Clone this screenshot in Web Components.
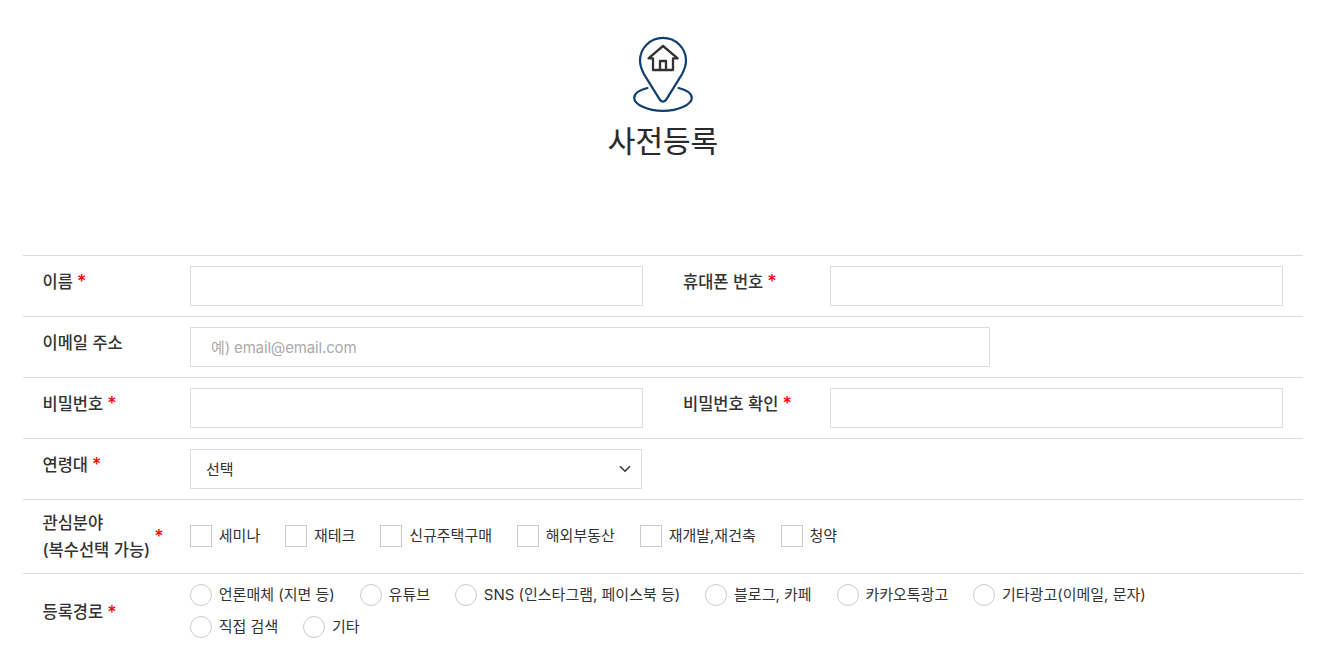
<!DOCTYPE html>
<html lang="ko">
<head>
<meta charset="utf-8">
<title>사전등록</title>
<style>
  html { overflow: hidden; }
  body {
    margin: 0;
    background: #fff;
    color: #333;
    font-family: Inter, "Noto Sans CJK KR", sans-serif;
  }
</style>
</head>
<body>

<signup-page>
  <form-heading>사전등록</form-heading>
  <form-table>
    <form-row>
      <form-label required raised>이름</form-label>
      <text-field></text-field>
      <form-label required raised>휴대폰 번호</form-label>
      <text-field></text-field>
    </form-row>
    <form-row>
      <form-label raised>이메일 주소</form-label>
      <text-field class="wide" placeholder="예) email@email.com"></text-field>
    </form-row>
    <form-row>
      <form-label required raised>비밀번호</form-label>
      <text-field type="password"></text-field>
      <form-label required raised>비밀번호 확인</form-label>
      <text-field type="password"></text-field>
    </form-row>
    <form-row>
      <form-label required raised>연령대</form-label>
      <select-field value="선택"></select-field>
    </form-row>
    <form-row>
      <form-label required>관심분야<br>(복수선택 가능)</form-label>
      <choice-group class="span">
        <choice-item>세미나</choice-item>
        <choice-item>재테크</choice-item>
        <choice-item>신규주택구매</choice-item>
        <choice-item>해외부동산</choice-item>
        <choice-item>재개발,재건축</choice-item>
        <choice-item>청약</choice-item>
      </choice-group>
    </form-row>
    <form-row>
      <form-label required lowered>등록경로</form-label>
      <choice-group class="span">
        <choice-item round>언론매체 (지면 등)</choice-item>
        <choice-item round>유튜브</choice-item>
        <choice-item round>SNS (인스타그램, 페이스북 등)</choice-item>
        <choice-item round>블로그, 카페</choice-item>
        <choice-item round>카카오톡광고</choice-item>
        <choice-item round>기타광고(이메일, 문자)</choice-item>
        <choice-item round>직접 검색</choice-item>
        <choice-item round>기타</choice-item>
      </choice-group>
    </form-row>
  </form-table>
</signup-page>

<script>
  customElements.define('signup-page',
    class extends HTMLElement {
      constructor() {
        super()
        this.attachShadow({ mode: 'open' }).innerHTML = `
          <style>
            :host { display: block; padding: 0 32px 0 23px; }
          </style>
          <slot></slot>
        `
      }
    }
  )

  customElements.define('form-heading',
    class extends HTMLElement {
      constructor() {
        super()
        this.attachShadow({ mode: 'open' }).innerHTML = `
          <style>
            :host { display: flex; flex-direction: column; align-items: center; padding-top: 36px; height: 255px; box-sizing: border-box; }
            svg { display: block; }
            h1 { margin: 7px 0 0; font-size: 30px; font-weight: 400; line-height: 44px; color: #2a2a2a; -webkit-text-stroke: 0.15px #2a2a2a; }
          </style>
          <svg width="62" height="76" viewBox="0 0 62 76" fill="none" stroke-linecap="round" stroke-linejoin="round">
            <path d="M31 1.8C18.4 1.8 8 12 8 24.5c0 5 1.6 9 3.8 13.3L27.6 63.4c1.7 2.9 5.1 2.9 6.8 0L50.2 37.8c2.2-4.3 3.8-8.3 3.8-13.3C54 12 43.6 1.8 31 1.8z" stroke="#0f3e70" stroke-width="2.2"/>
            <path d="M15.5 52C7.5 54 2.2 57.6 2.2 62c0 6.2 12.9 12.8 28.8 12.8S59.8 68.2 59.8 62c0-4.4-5.3-8-13.3-10" stroke="#0f3e70" stroke-width="2.2"/>
            <path d="M16.5 22.3 31 10l14.7 12.3H41V34H21V22.3z" stroke="#333" stroke-width="2.3"/>
            <path d="M28 34V25h6v9" stroke="#333" stroke-width="2.3"/>
          </svg>
          <h1><slot></slot></h1>
        `
      }
    }
  )

  customElements.define('form-table',
    class extends HTMLElement {
      constructor() {
        super()
        this.attachShadow({ mode: 'open' }).innerHTML = `
          <style>
            :host { display: block; border-top: 1px solid #dcdcdc; }
          </style>
          <slot></slot>
        `
      }
    }
  )

  customElements.define('form-row',
    class extends HTMLElement {
      constructor() {
        super()
        this.attachShadow({ mode: 'open' }).innerHTML = `
          <style>
            :host {
              display: grid;
              grid-template-columns: 147px 453px 187px 453px;
              align-items: center;
              padding: 10px 20px;
              border-bottom: 1px solid #dcdcdc;
            }
            ::slotted(form-label:nth-of-type(2)) { margin-left: 40px; }
            ::slotted(.wide) { width: 800px; }
            ::slotted(.span) { grid-column: 2 / 5; max-width: 1000px; }
          </style>
          <slot></slot>
        `
      }
    }
  )

  customElements.define('form-label',
    class extends HTMLElement {
      constructor() {
        super()
        this.attachShadow({ mode: 'open' }).innerHTML = `
          <style>
            :host {
              display: flex;
              align-items: center;
              gap: 4px;
              margin-left: -0.5px;
              font-size: 16.5px;
              font-weight: 500;
              line-height: 26.5px;
              color: #333;
            }
            :host([raised]) { padding-bottom: 8px; }
            :host([lowered]) { padding-top: 2px; }
            .star { color: #f00; display: none; font-size: 18px; line-height: 1; }
            :host([required]) .star { display: inline; }
          </style>
          <span><slot></slot></span><span class="star">*</span>
        `
      }
    }
  )

  customElements.define('text-field',
    class extends HTMLElement {
      static get observedAttributes() { return ['placeholder', 'type'] }

      constructor() {
        super()
        this.attachShadow({ mode: 'open' }).innerHTML = `
          <style>
            :host { display: block; }
            input {
              display: block;
              box-sizing: border-box;
              width: 100%;
              height: 40px;
              padding: 0 20px;
              border: 1px solid #dcdcdc;
              border-radius: 0;
              background: #fff;
              outline: none;
              font: 400 15px Inter, "Noto Sans CJK KR", sans-serif;
              letter-spacing: -0.15px;
              color: #333;
            }
            input::placeholder { color: #aaa; opacity: 1; }
          </style>
          <input type="text">
        `
      }

      attributeChangedCallback(name, oldValue, newValue) {
        this.shadowRoot.querySelector('input').setAttribute(name, newValue)
      }
    }
  )

  customElements.define('select-field',
    class extends HTMLElement {
      constructor() {
        super()
        this.attachShadow({ mode: 'open' }).innerHTML = `
          <style>
            :host {
              display: flex;
              align-items: center;
              justify-content: space-between;
              box-sizing: border-box;
              width: 452px;
              height: 40px;
              padding: 0 10px 0 15px;
              border: 1px solid #dcdcdc;
              font-size: 15px;
              color: #333;
            }
            #value { padding-bottom: 2px; }
            svg { display: block; }
          </style>
          <span id="value"></span>
          <svg width="12" height="8" viewBox="0 0 12 8" fill="none" stroke="#333" stroke-width="1.5">
            <path d="M1 1.2 6 6.2 11 1.2"/>
          </svg>
        `
      }

      connectedCallback() {
        this.shadowRoot.getElementById('value').textContent = this.getAttribute('value')
      }
    }
  )

  customElements.define('choice-group',
    class extends HTMLElement {
      constructor() {
        super()
        this.attachShadow({ mode: 'open' }).innerHTML = `
          <style>
            :host { display: flex; flex-wrap: wrap; column-gap: 25px; row-gap: 10px; align-items: center; padding-bottom: 1px; }
          </style>
          <slot></slot>
        `
      }
    }
  )

  customElements.define('choice-item',
    class extends HTMLElement {
      constructor() {
        super()
        this.attachShadow({ mode: 'open' }).innerHTML = `
          <style>
            :host { display: inline-flex; align-items: center; gap: 6.8px; font-size: 15px; line-height: 22px; color: #333; }
            .box { width: 22px; height: 22px; box-sizing: border-box; border: 1px solid #cfcbc4; background: #fff; }
            :host([round]) .box { border-radius: 50%; }
          </style>
          <span class="box"></span><span><slot></slot></span>
        `
      }
    }
  )
</script>
</body>
</html>
